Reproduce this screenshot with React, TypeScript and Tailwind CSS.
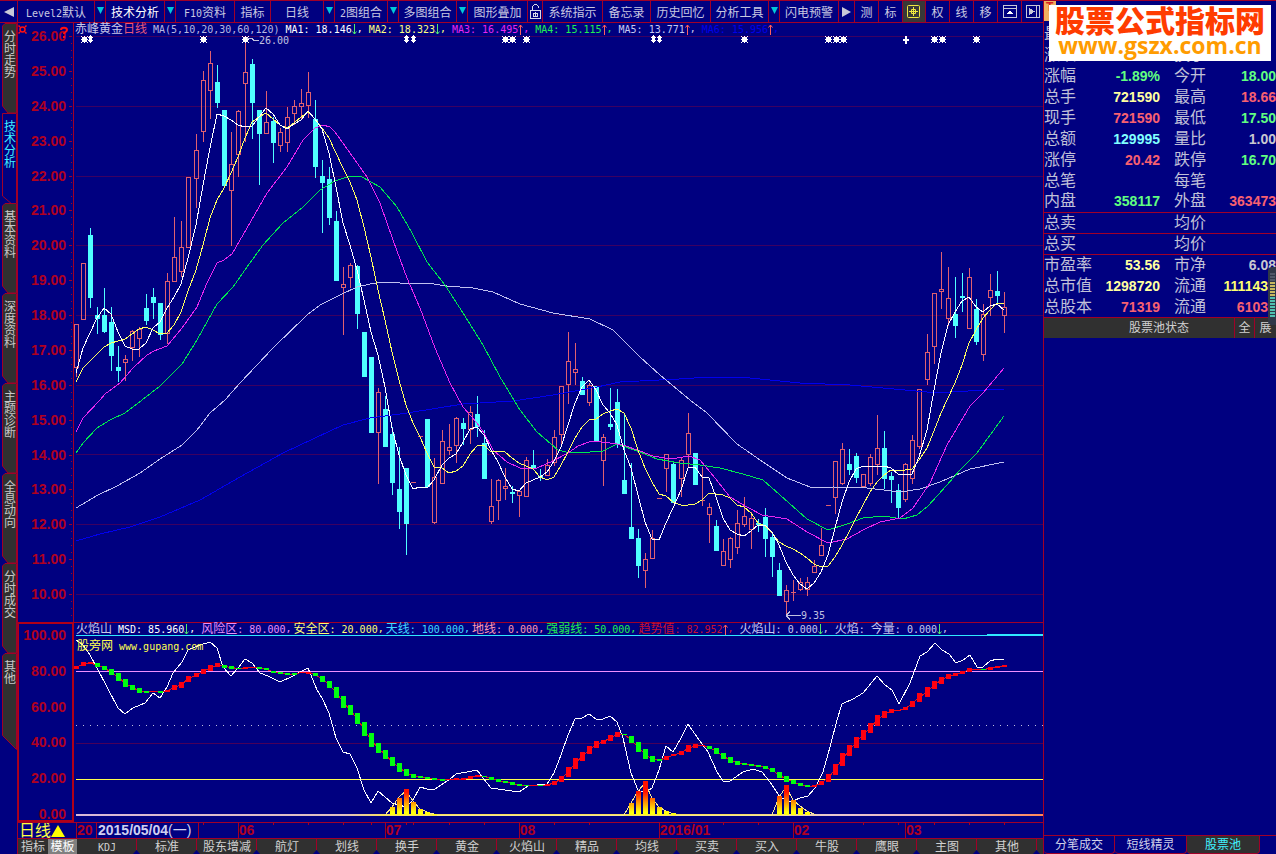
import React from "react";

type Candle = [x: number, kind: "u" | "d", high: number, top: number, bottom: number, low: number];
type Bar = [x: number, top: number, bottom: number, color: "r" | "g"];

const CANDLES: Candle[] = [
  [76, "u", 324, 324, 367, 377], [83, "u", 263, 263, 319, 320], [90, "d", 228, 235, 298, 308],
  [97, "d", 307, 315, 319, 334], [104, "d", 288, 315, 332, 333], [111, "d", 307, 322, 356, 371],
  [118, "d", 346, 367, 371, 382], [125, "u", 355, 359, 362, 381], [132, "u", 330, 331, 347, 361],
  [139, "u", 327, 329, 338, 357], [146, "d", 294, 308, 321, 325], [153, "d", 288, 297, 303, 319],
  [160, "d", 303, 303, 335, 340], [167, "u", 273, 281, 333, 344], [174, "u", 217, 257, 281, 281],
  [181, "u", 221, 247, 271, 277], [188, "u", 177, 177, 247, 247], [196, "u", 134, 150, 178, 208],
  [203, "u", 71, 80, 131, 142], [210, "u", 51, 63, 90, 119], [217, "d", 65, 82, 103, 108],
  [224, "d", 110, 110, 186, 186], [231, "u", 132, 164, 190, 246], [238, "u", 110, 111, 154, 177],
  [245, "u", 40, 72, 83, 142], [252, "d", 59, 64, 103, 139], [259, "d", 110, 110, 134, 185],
  [266, "u", 91, 122, 133, 133], [273, "d", 117, 121, 143, 163], [280, "u", 128, 132, 145, 152],
  [287, "u", 107, 117, 142, 152], [294, "u", 100, 106, 113, 125], [301, "u", 89, 103, 106, 120],
  [308, "u", 72, 92, 105, 118], [315, "d", 100, 119, 167, 178], [322, "d", 160, 176, 183, 233],
  [329, "d", 167, 179, 218, 225], [336, "d", 211, 221, 281, 281], [343, "u", 267, 284, 287, 335],
  [350, "u", 263, 265, 277, 288], [357, "d", 265, 266, 314, 329], [364, "d", 332, 332, 377, 377],
  [371, "d", 357, 357, 433, 433], [378, "u", 388, 392, 432, 484], [385, "d", 396, 409, 447, 447],
  [392, "d", 427, 434, 483, 495], [399, "d", 447, 489, 512, 529], [406, "d", 468, 468, 524, 555],
  [413, "u", 482, 482, 482, 482], [420, "u", 436, 436, 436, 436], [427, "d", 419, 419, 487, 487],
  [434, "u", 458, 477, 522, 524], [442, "u", 430, 441, 483, 483], [449, "u", 424, 447, 450, 455],
  [456, "u", 417, 418, 445, 463], [463, "d", 418, 423, 429, 445], [470, "u", 406, 412, 429, 444],
  [477, "d", 396, 414, 427, 437], [484, "d", 430, 443, 479, 479], [491, "u", 479, 506, 521, 524],
  [498, "u", 479, 480, 500, 520], [505, "u", 468, 486, 488, 500], [512, "d", 486, 492, 494, 503],
  [519, "u", 490, 491, 495, 517], [526, "u", 457, 460, 496, 496], [533, "d", 450, 465, 468, 468],
  [540, "d", 469, 476, 478, 481], [547, "u", 459, 465, 475, 475], [554, "u", 430, 437, 462, 466],
  [561, "u", 386, 386, 434, 445], [568, "u", 332, 361, 384, 404], [575, "u", 343, 369, 372, 385],
  [582, "d", 377, 381, 395, 395], [589, "u", 383, 385, 402, 406], [596, "d", 386, 386, 441, 441],
  [603, "u", 434, 437, 460, 486], [610, "d", 388, 424, 427, 430], [617, "d", 389, 402, 444, 448],
  [624, "d", 413, 480, 494, 494], [631, "d", 463, 527, 539, 539], [638, "d", 529, 538, 566, 578],
  [645, "u", 553, 559, 570, 588], [652, "u", 530, 538, 558, 558], [659, "u", 498, 498, 498, 498],
  [666, "u", 454, 454, 468, 492], [673, "d", 461, 464, 503, 503], [681, "u", 457, 460, 478, 497],
  [688, "u", 413, 433, 454, 467], [695, "d", 453, 453, 485, 485], [702, "u", 467, 500, 501, 506],
  [709, "u", 503, 507, 514, 543], [716, "d", 520, 526, 551, 551], [723, "u", 539, 551, 565, 565],
  [730, "u", 537, 538, 559, 568], [737, "u", 510, 523, 547, 554], [744, "u", 497, 516, 524, 527],
  [751, "u", 512, 518, 529, 549], [758, "d", 519, 523, 525, 532], [765, "d", 508, 517, 539, 557],
  [772, "d", 533, 537, 557, 577], [779, "d", 563, 570, 596, 596], [786, "u", 585, 590, 601, 615],
  [793, "u", 580, 592, 593, 601], [800, "u", 578, 582, 589, 591], [807, "u", 577, 582, 589, 596],
  [814, "u", 560, 566, 572, 572], [821, "u", 528, 545, 555, 555], [828, "u", 505, 505, 505, 505],
  [835, "u", 461, 461, 497, 514], [842, "u", 443, 449, 483, 485], [849, "d", 449, 464, 470, 475],
  [856, "d", 453, 456, 478, 483], [863, "u", 474, 474, 486, 486], [870, "u", 454, 457, 483, 486],
  [877, "u", 415, 448, 464, 475], [884, "d", 431, 448, 479, 489], [891, "d", 472, 476, 480, 503],
  [898, "d", 484, 490, 508, 518], [905, "u", 463, 464, 499, 502], [912, "u", 435, 440, 478, 484],
  [919, "u", 389, 389, 446, 449], [927, "u", 334, 352, 379, 385], [934, "u", 293, 293, 346, 364],
  [941, "u", 252, 289, 291, 309], [948, "u", 267, 298, 318, 326], [955, "d", 277, 314, 326, 338],
  [962, "d", 273, 296, 298, 312], [969, "u", 268, 277, 328, 328], [976, "d", 299, 309, 342, 345],
  [983, "u", 304, 314, 354, 361], [990, "u", 274, 290, 297, 316], [997, "d", 271, 291, 296, 305],
  [1004, "u", 292, 307, 315, 333],
];

const MA5 =
  "76,373 83,348 90,333 97,318 104,308 111,314 118,332 125,346 132,349 139,349 146,343 153,328 160,322 167,308 174,297 181,284 188,258 196,225 203,185 210,148 217,114 224,116 231,120 238,125 245,127 252,126 259,117 266,108 273,114 280,125 287,129 294,124 301,120 308,111 315,119 322,129 329,153 336,187 343,223 350,245 357,270 364,300 371,332 378,355 385,387 392,428 399,455 406,475 413,489 420,487 427,488 434,480 442,465 449,458 456,454 463,442 470,429 477,427 484,435 491,450 498,462 505,477 512,489 519,491 526,483 533,480 540,477 547,472 554,461 561,447 568,425 575,403 582,387 589,380 596,390 603,405 610,413 617,425 624,450 631,468 638,495 645,522 652,539 659,540 666,523 673,508 681,490 688,468 695,467 702,477 709,478 716,497 723,518 730,530 737,534 744,536 751,531 758,525 765,525 772,532 779,545 786,562 793,575 800,584 807,589 814,583 821,572 828,555 835,528 842,502 849,482 856,469 863,466 870,466 877,466 884,466 891,468 898,474 905,475 912,474 919,457 927,430 934,390 941,353 948,325 955,312 962,301 969,297 976,307 983,312 990,306 997,304 1004,310";
const MA10 =
  "76,382 83,368 90,361 97,354 104,347 111,343 118,341 125,339 132,334 139,329 146,327 153,330 160,334 167,333 174,325 181,312 188,291 196,270 203,245 210,218 217,200 224,188 231,173 238,157 245,138 252,122 259,117 266,113 273,119 280,125 287,128 294,123 301,117 308,112 315,119 322,128 329,138 336,153 343,168 350,182 357,200 364,227 371,257 378,290 385,320 392,352 399,380 406,405 413,423 420,437 427,453 434,467 442,468 449,473 456,471 463,466 470,454 477,446 484,445 491,452 498,451 505,452 512,458 519,463 526,466 533,469 540,477 547,480 554,477 561,465 568,452 575,438 582,427 589,420 596,419 603,414 610,411 617,409 624,413 631,428 638,450 645,468 652,482 659,494 666,496 673,502 681,505 688,505 695,504 702,500 709,493 716,494 723,495 730,498 737,505 744,507 751,513 758,523 765,526 772,533 779,542 786,546 793,549 800,553 807,558 814,564 821,567 828,566 835,557 842,545 849,532 856,518 863,505 870,492 877,482 884,475 891,470 898,470 905,470 912,469 919,460 927,448 934,431 941,413 948,398 955,383 962,365 969,343 976,330 983,318 990,310 997,303 1004,304";
const MA20 =
  "76,432 83,418 100,400 105,394 120,383 133,368 147,355 154,351 167,346 182,328 197,307 207,283 217,263 224,260 232,254 247,228 267,193 287,167 303,140 315,128 323,125 330,127 335,132 350,153 367,177 380,203 393,240 407,278 420,308 435,348 450,383 463,407 477,423 484,433 493,450 507,462 520,468 537,468 553,461 568,453 578,446 592,441 610,443 623,445 640,451 653,456 665,458 677,458 689,456 700,460 715,478 730,497 747,507 762,515 787,519 807,532 828,543 847,539 863,530 880,522 900,518 913,508 930,483 947,445 970,406 983,393 1004,368";
const MA30 =
  "76,453 83,443 97,428 110,420 125,413 142,400 160,386 182,364 197,340 217,304 233,287 247,267 263,245 283,223 303,207 320,190 330,184 335,181 350,176 362,177 380,187 397,207 412,233 427,262 445,285 463,313 483,345 500,377 520,410 537,432 558,450 570,453 590,452 603,451 617,444 640,452 657,459 679,463 700,465 720,468 743,474 763,480 780,495 807,519 828,530 847,524 863,518 883,516 903,519 917,515 928,506 947,485 960,470 977,453 1004,416";
const MA60 =
  "76,508 98,495 117,486 140,473 160,459 182,445 197,430 210,413 225,400 240,383 273,348 307,315 320,305 340,295 357,287 370,284 385,282 400,283 427,283 447,286 473,288 493,292 520,304 553,313 590,319 613,330 640,357 660,375 690,400 707,413 737,444 763,462 787,478 810,487 820,488 833,487 867,488 900,492 920,489 940,482 970,469 1004,462";
const MA120 =
  "76,541 100,534 130,527 160,517 200,500 240,477 283,453 330,431 343,425 370,418 407,413 463,404 513,401 553,395 597,387 620,382 679,379 710,377 740,377 800,383 850,385 883,388 927,392 950,392 1004,389";

const MSD =
  "76,640 83,645 90,655 97,668 107,687 118,708 125,714 133,708 145,703 153,693 160,698 167,687 173,673 182,662 188,650 200,645 210,642 217,648 223,667 231,676 238,668 245,659 252,663 260,673 268,676 280,682 293,676 308,668 317,690 322,698 329,713 336,738 343,752 350,754 357,768 364,790 371,803 378,791 385,797 392,803 399,805 406,807 413,800 420,787 427,789 435,789 450,779 456,774 472,771 477,770 483,778 491,788 505,790 519,792 528,786 547,784 554,773 561,755 568,735 575,719 582,718 589,714 596,719 603,719 610,716 617,722 623,738 631,773 638,790 645,793 652,788 659,770 666,746 673,752 681,738 688,724 697,737 708,752 717,772 723,781 730,781 743,772 753,769 762,772 770,782 780,797 790,802 800,798 808,796 815,788 823,772 830,747 837,720 842,704 853,699 863,693 877,676 885,685 892,690 899,704 910,683 920,656 927,652 935,643 942,650 949,654 956,663 963,660 970,655 977,667 983,667 990,661 997,659 1004,660";

const TREND: Bar[] = [
  [76, 666, 669, "r"], [83, 662, 666, "r"], [90, 662, 664, "r"], [97, 663, 667, "g"], [104, 666, 670, "g"],
  [111, 669, 675, "g"], [118, 673, 681, "g"], [125, 679, 687, "g"], [132, 685, 690, "g"], [139, 688, 693, "g"],
  [146, 691, 693, "g"], [153, 691, 692, "r"], [160, 691, 693, "g"], [167, 690, 692, "r"], [174, 685, 690, "r"],
  [181, 682, 688, "r"], [188, 676, 682, "r"], [196, 673, 677, "r"], [203, 669, 674, "r"], [210, 665, 671, "r"],
  [217, 663, 667, "r"], [224, 665, 668, "g"], [231, 666, 669, "g"], [238, 668, 669, "g"], [245, 667, 669, "r"],
  [252, 667, 668, "r"], [259, 667, 669, "g"], [266, 668, 670, "g"], [273, 671, 673, "g"], [280, 672, 674, "g"],
  [287, 673, 675, "g"], [294, 673, 675, "g"], [301, 672, 673, "r"], [308, 672, 674, "r"], [315, 673, 676, "g"],
  [322, 676, 682, "g"], [329, 681, 688, "g"], [336, 687, 698, "g"], [343, 696, 708, "g"], [350, 705, 715, "g"],
  [357, 713, 724, "g"], [364, 722, 736, "g"], [371, 733, 747, "g"], [378, 743, 753, "g"], [385, 750, 759, "g"],
  [392, 757, 766, "g"], [399, 763, 772, "g"], [406, 769, 776, "g"], [413, 774, 778, "g"], [420, 776, 778, "g"],
  [427, 777, 779, "g"], [434, 778, 780, "g"], [442, 779, 781, "g"], [449, 779, 780, "r"], [456, 778, 780, "r"],
  [463, 778, 780, "r"], [470, 776, 779, "r"], [477, 775, 777, "r"], [484, 776, 777, "g"], [491, 777, 780, "g"],
  [498, 779, 782, "g"], [505, 781, 783, "g"], [512, 782, 785, "g"], [519, 784, 786, "g"], [526, 785, 786, "g"],
  [533, 785, 786, "r"], [540, 785, 786, "g"], [547, 784, 786, "r"], [554, 781, 785, "r"], [561, 776, 782, "r"],
  [568, 767, 777, "r"], [575, 758, 769, "r"], [582, 752, 761, "r"], [589, 746, 754, "r"], [596, 741, 748, "r"],
  [603, 740, 744, "r"], [610, 735, 741, "r"], [617, 732, 737, "r"], [624, 734, 735, "g"], [631, 736, 743, "g"],
  [638, 742, 752, "g"], [645, 749, 759, "g"], [652, 756, 762, "g"], [659, 759, 761, "g"], [666, 756, 760, "r"],
  [673, 754, 756, "r"], [681, 751, 755, "r"], [688, 745, 752, "r"], [695, 744, 748, "r"], [702, 745, 746, "r"],
  [709, 746, 749, "g"], [716, 748, 754, "g"], [723, 753, 759, "g"], [730, 757, 763, "g"], [737, 761, 765, "g"],
  [744, 763, 765, "g"], [751, 764, 766, "g"], [758, 765, 767, "g"], [765, 766, 769, "g"], [772, 768, 772, "g"],
  [779, 772, 778, "g"], [786, 776, 782, "g"], [793, 780, 784, "g"], [800, 783, 786, "g"], [807, 785, 787, "g"],
  [814, 785, 787, "r"], [821, 781, 785, "r"], [828, 774, 782, "r"], [835, 764, 775, "r"], [842, 753, 766, "r"],
  [849, 745, 756, "r"], [856, 737, 748, "r"], [863, 730, 740, "r"], [870, 723, 733, "r"], [877, 715, 726, "r"],
  [884, 711, 718, "r"], [891, 709, 713, "r"], [898, 710, 711, "r"], [905, 707, 710, "r"], [912, 701, 707, "r"],
  [919, 693, 702, "r"], [927, 687, 697, "r"], [934, 681, 689, "r"], [941, 677, 684, "r"], [948, 674, 679, "r"],
  [955, 673, 676, "r"], [962, 671, 674, "r"], [969, 668, 672, "r"], [976, 669, 670, "r"], [983, 669, 670, "g"],
  [990, 667, 670, "r"], [997, 666, 668, "r"], [1004, 665, 667, "r"],
];

const FLAMES: [number, number][] = [
  [392, 807], [399, 798], [406, 789], [413, 802], [420, 809], [427, 812], [434, 814],
  [631, 803], [638, 791], [645, 781], [652, 798], [659, 807], [666, 811], [673, 813],
  [779, 796], [786, 785], [793, 800], [800, 808], [807, 812],
];

const STARS = [84, 203, 245, 505, 512, 526, 744, 828, 836, 843, 934, 942, 976];
const DIAMONDS = [90, 406, 413, 653, 659];

const CJK = "font-['DejaVu_Sans_Mono','Noto_Sans_CJK_SC',sans-serif]";

function Mixed({ text }: { text: string }) {
  return (
    <>
      {text.split(/([\x20-\x7e]+)/).map((part, i) =>
        /^[\x20-\x7e]/.test(part) ? (
          <span key={i} className="text-[10px] whitespace-pre">{part}</span>
        ) : (
          part
        ),
      )}
    </>
  );
}

function Drop() {
  return (
    <span className="flex w-[11px] shrink-0 justify-center border-l border-[#a00028] pt-1.5">
      <svg width="7" height="8" viewBox="0 0 7 8">
        <path d="M0 0H7L3.5 7Z" fill="#00c8d8" />
      </svg>
    </span>
  );
}

const TOOLS: { label: string; width: string; drop?: boolean; active?: boolean }[] = [
  { label: "Level2默认", width: "w-[88px]", drop: true },
  { label: "技术分析", width: "w-[70px]", drop: true, active: true },
  { label: "F10资料", width: "w-[59px]" },
  { label: "指标", width: "w-[36px]" },
  { label: "日线", width: "w-[64px]", drop: true },
  { label: "2图组合", width: "w-[64px]", drop: true },
  { label: "多图组合", width: "w-[69px]", drop: true },
  { label: "图形叠加", width: "w-[60px]" },
  { label: "lock", width: "w-[15px]" },
  { label: "系统指示", width: "w-[60px]" },
  { label: "备忘录", width: "w-[48px]" },
  { label: "历史回忆", width: "w-[60px]" },
  { label: "分析工具", width: "w-[69px]", drop: true },
  { label: "闪电预警", width: "w-[59px]" },
  { label: "next", width: "w-[16px]" },
  { label: "测", width: "w-[24px]" },
  { label: "标", width: "w-[24px]" },
  { label: "cross", width: "w-[23px]" },
  { label: "权", width: "w-[24px]" },
  { label: "线", width: "w-[24px]" },
  { label: "移", width: "w-[24px]" },
  { label: "up", width: "w-[24px]" },
  { label: "end", width: "w-[21px]" },
];

const ICONS: Record<string, React.ReactNode> = {
  lock: (
    <svg width="13" height="17" viewBox="0 0 13 17" fill="none" stroke="#d8d8e8" shapeRendering="crispEdges">
      <path d="M3.500 7V3.500L5.500 1.500H7.500L9.500 3.500V5M1.500 7.500H11.500V15.500H1.500ZM4.500 10.500H8.500V13.500H4.500ZM6.500 9V14" />
    </svg>
  ),
  next: (
    <svg width="9" height="10" viewBox="0 0 9 10">
      <path d="M0 0L9 5L0 10Z" fill="#c8c8d8" />
    </svg>
  ),
  cross: (
    <svg width="14" height="14" viewBox="0 0 14 14" fill="none" stroke="#f0e840">
      <rect x="0.5" y="0.5" width="12" height="12" rx="1" />
      <path d="M6.500 2V11M2 6.500H11" />
      <path d="M4.500 4.500H8.500V8.500H4.500Z" />
    </svg>
  ),
  up: (
    <svg width="14" height="14" viewBox="0 0 14 14" fill="none" stroke="#c8c8d8" shapeRendering="crispEdges">
      <path d="M0.500 0.500H13.500V12.500H0.500ZM0 3.500H14" />
      <path d="M7 5.500L10 8.500H4Z" fill="#fff" stroke="none" />
    </svg>
  ),
  end: (
    <svg width="14" height="14" viewBox="0 0 14 14" fill="none" stroke="#c8c8d8" shapeRendering="crispEdges">
      <path d="M0.500 0.500H13.500V12.500H0.500ZM10.500 0V13" />
      <path d="M3 3L9 6.500L3 10Z" fill="#c8c8d8" stroke="none" />
    </svg>
  ),
};

function Toolbar() {
  return (
    <nav className="flex h-[23px] shrink-0 border-y border-[#a00028] text-xs text-[#c8c8e0]">
      <button aria-label="上一页" className="flex w-[18px] shrink-0 items-center justify-center border-r border-[#a00028]">
        <svg width="10" height="10" viewBox="0 0 10 10">
          <path d="M10 0V10L0 5Z" fill="#c8c8d8" />
        </svg>
      </button>
      {TOOLS.map((t) => (
        <button
          key={t.label}
          aria-label={t.label}
          className={`flex shrink-0 items-stretch border-r border-[#a00028] ${t.width} ${t.active ? "text-white" : ""} ${t.label === "cross" ? "bg-[#383838]" : ""} ${t.label === "end" ? "border-r-0" : ""}`}
        >
          <span className={`flex flex-1 items-center justify-center whitespace-nowrap ${ICONS[t.label] ? "" : "pt-0.5"}`}>
            <span>{ICONS[t.label] ?? <Mixed text={t.label} />}</span>
          </span>
          {t.drop && <Drop />}
        </button>
      ))}
    </nav>
  );
}

const SIDE_TABS = ["分时走势", "技术分析", "基本资料", "深度资料", "主题诊断", "全息动向", "分时成交", "其他"];

function SideTabs() {
  return (
    <aside className="flex w-[18px] shrink-0 flex-col border-r border-[#a00028]">
      {SIDE_TABS.map((label, i) => {
        const active = i === 1;
        const last = i === 7;
        return (
          <button key={label} className={`relative flex w-full shrink-0 justify-end pt-2 pr-px ${last ? "h-[98px]" : "h-[90px]"}`}>
            <svg className="absolute inset-0" width="17" height={last ? 98 : 90} fill={active ? "#000080" : "#303030"} stroke="#a00028">
              <path
                d={
                  last
                    ? "M2.500 3L5 0.500H16.500V96.500L2.500 82.500Z"
                    : active
                      ? "M2.500 0.500H16.500V95L2.500 83Z"
                      : "M2.500 3L5 0.500H16.500V90H8L2.500 83Z"
                }
              />
            </svg>
            <span className={`relative w-3 text-xs leading-3 break-all ${active ? "text-[#40f0ff]" : "text-[#c8c8c8]"}`}>{label}</span>
          </button>
        );
      })}
    </aside>
  );
}

function Arrow({ up }: { up?: boolean }) {
  return (
    <svg className="h-[11px] w-[5px] shrink-0" viewBox="0 0 5 11" fill="none" stroke={up ? "#ff6060" : "#50e870"}>
      <path d={up ? "M2.500 11V1M0.500 3.500L2.500 1L4.500 3.500" : "M2.500 0V10M0.500 7.500L2.500 10L4.500 7.500"} />
    </svg>
  );
}

function Item({ text, color, arrow }: { text: string; color: string; arrow?: "up" | "down" }) {
  const value = text.includes(".");
  return (
    <span className={`flex items-center ${color} ${arrow || !value ? "mr-1" : ""}`}>
      <span className="whitespace-nowrap"><Mixed text={text} /></span>
      {arrow && <Arrow up={arrow === "up"} />}
      {value && <span className="text-[10px]">,</span>}
    </span>
  );
}

function PriceAxis() {
  const labels = Array.from({ length: 17 }, (_, i) => `${26 - i}.00`);
  return (
    <div className="relative flex w-[56px] shrink-0 flex-col justify-between border-r border-[#a00028] pt-1 pr-[7px] pb-[19px] text-right text-sm leading-[18px] font-bold text-[#b00020]">
      {labels.map((l) => (
        <span key={l}>{l}</span>
      ))}
      <svg className="absolute inset-0 h-full w-full" viewBox="18 23 56 599" preserveAspectRatio="none" shapeRendering="crispEdges">
        {labels.map((l, i) => (
          <path key={l} d={`M70 ${Math.round(36 + i * 34.875) + 0.5}H73`} stroke="#a00028" />
        ))}
        {Array.from({ length: 84 }, (_, i) => (
          <path key={i} d={`M72 ${Math.round(36 + i * 6.975) + 0.5}H73`} stroke="#a00028" />
        ))}
      </svg>
      <svg className="absolute top-0.5 left-0" width="52" height="16" fill="none" stroke="#ff1010">
        <circle cx="4.500" cy="4.500" r="2.500" strokeWidth="1.500" />
        <path d="M0.500 0.500L2 2M8.500 0.500L7 2M0.500 8.500L2 7M8.500 8.500L7 7" strokeWidth="1.500" />
        <path d="M43 5C43 2 49 2 49 5C49 7 46 7 46 9M46 11V13" strokeWidth="2" />
      </svg>
    </div>
  );
}

function PriceChart() {
  return (
    <section className="flex min-h-0 grow-[599] basis-0">
      <PriceAxis />
      <div className="relative flex min-h-0 min-w-0 flex-1">
        <svg className="min-h-0 min-w-0 flex-1" viewBox="74 23 969 599" preserveAspectRatio="none" fill="none" shapeRendering="crispEdges">
          {[36, 106, 176, 245, 315, 385, 454, 524, 594].map((y) => (
            <path key={y} d={`M76 ${y + 0.5}H1043`} stroke="#3c0060" />
          ))}
          {CANDLES.map(([x, kind, high, top, bottom, low]) =>
            kind === "d" ? (
              <g key={x} fill="#50ffff">
                <rect x={x} y={high} width="1" height={low - high} />
                <rect x={x - 2} y={top} width="5" height={Math.max(bottom - top, 1)} />
              </g>
            ) : bottom - top < 2 ? (
              <g key={x} fill="#e06070">
                <rect x={x} y={high} width="1" height={low - high} />
                <rect x={x - 2} y={top} width="5" height="1" />
              </g>
            ) : (
              <g key={x} stroke="#e06070">
                <path d={`M${x + 0.5} ${high}V${top}M${x + 0.5} ${bottom}V${low}`} />
                <rect x={x - 1.5} y={top + 0.5} width="4" height={bottom - top} />
              </g>
            ),
          )}
          <polyline points={MA120} stroke="#0000ee" />
          <polyline points={MA60} stroke="#c0c0f0" />
          <polyline points={MA30} stroke="#00e850" />
          <polyline points={MA20} stroke="#e828f0" />
          <polyline points={MA10} stroke="#ffff60" />
          <polyline points={MA5} stroke="#ffffff" />
          {STARS.map((x) => (
            <path key={x} d={`M${x - 2} 37h5v5h-5zM${x} 36h1v7h-1zM${x - 3} 39h7v1h-7zM${x - 3} 36h1v1h-1zM${x + 3} 36h1v1h-1zM${x - 3} 42h1v1h-1zM${x + 3} 42h1v1h-1z`} fill="#fff" />
          ))}
          {DIAMONDS.map((x) => (
            <path key={x} d={`M${x} 35h1v8h-1zM${x - 1} 36h3v6h-3zM${x - 2} 37h5v1h-5zM${x - 2} 40h5v1h-5z`} fill="#fff" />
          ))}
          <path d="M905 36h1v3h2v1h-2v3h-1v-3h-2v-1h2z" fill="#fff" stroke="#fff" />
          <path d="M247 38.500L252 38.500L254 40.500H259M786 615.500H801M786 615.500L790 611.500M786 615.500L790 619.500" stroke="#c0c0e0" />
          <g fill="#c0c0e0" fontSize="10" fontFamily="DejaVu Sans Mono, monospace">
            <text x="259" y="44">26.00</text>
            <text x="801" y="619">9.35</text>
          </g>
        </svg>
        <div className="absolute top-0 left-px flex h-3 items-center gap-0.5 text-xs leading-3 text-[#c8c8e8]">
          <span className="mr-1 whitespace-nowrap">赤峰黄金<span className="text-[#e85878]">日线</span></span>
          <Item text="MA(5,10,20,30,60,120)" color="text-[#b8b8e0]" />
          <Item text="MA1: 18.146" color="text-white" arrow="down" />
          <Item text="MA2: 18.323" color="text-[#ffff80]" arrow="down" />
          <Item text="MA3: 16.495" color="text-[#e828f0]" arrow="up" />
          <Item text="MA4: 15.115" color="text-[#20f050]" arrow="up" />
          <Item text="MA5: 13.771" color="text-[#c8c8f0]" arrow="up" />
          <Item text="MA6: 15.956" color="text-[#0000e8]" arrow="up" />
        </div>
      </div>
    </section>
  );
}

function IndicatorChart() {
  const labels = ["100.00", "80.00", "60.00", "40.00", "20.00", "0.00"];
  return (
    <section className="flex min-h-0 grow-[200] basis-0">
      <div className="relative flex w-[56px] shrink-0 flex-col justify-between border-2 border-l border-[#b00018] pt-[5px] pr-[6px] text-right text-sm leading-3 font-bold text-[#b00020]">
        {labels.map((l) => (
          <span key={l}>{l}</span>
        ))}
      </div>
      <div className="relative flex min-h-0 min-w-0 flex-1 border-t border-[#a00028]">
        <svg className="min-h-0 min-w-0 flex-1" viewBox="74 623 969 199" preserveAspectRatio="none" fill="none" shapeRendering="crispEdges">
          <defs>
            <linearGradient id="flame" gradientUnits="userSpaceOnUse" x1="0" y1="792" x2="0" y2="812">
              <stop offset="0" stopColor="#ff1000" />
              <stop offset="0.500" stopColor="#ff9000" />
              <stop offset="1" stopColor="#ffff10" />
            </linearGradient>
            <linearGradient id="ground" gradientUnits="userSpaceOnUse" x1="74" y1="0" x2="1043" y2="0">
              <stop offset="0" stopColor="#d8b8d8" />
              <stop offset="0.280" stopColor="#e0c0c0" />
              <stop offset="0.320" stopColor="#f8e060" />
              <stop offset="0.680" stopColor="#f8e060" />
              <stop offset="0.780" stopColor="#e8c8d0" />
              <stop offset="0.900" stopColor="#e8b0c0" />
              <stop offset="1" stopColor="#ff8858" />
            </linearGradient>
          </defs>
          <path d="M76 743.500H1043" stroke="#480058" />
          <path d="M76 725.500H1043" stroke="#c0c0e0" strokeDasharray="1 6" />
          <path d="M76 635.500H1043M987 634.500H1043" stroke="#30e8ff" />
          <path d="M76 671.500H1043" stroke="#f090ff" />
          <path d="M76 779.500H1043" stroke="#ffff50" />
          <rect x="76" y="814" width="967" height="2" fill="url(#ground)" />
          <polyline points={MSD} stroke="#fff" />
          <polyline
            points="385,815 392,807 399,797 406,791 413,801 420,809 427,812 437,815 624,815 631,803 638,791 645,783 652,798 659,807 666,811 676,815 772,815 779,797 786,787 793,800 800,806 807,811 816,815"
            stroke="#f8e890"
          />
          <polyline points={TREND.map(([x, t, b]) => `${x},${(t + b) / 2}`).join(" ")} stroke="#e01818" />
          {TREND.map(([x, t, b, c]) => (
            <rect key={x} x={x - 2} y={t} width="5" height={b - t} fill={c === "r" ? "#ff0010" : "#00ff10"} />
          ))}
          {FLAMES.map(([x, t]) => (
            <rect key={x} x={x - 2} y={t} width="5" height={815 - t} fill="url(#flame)" />
          ))}
        </svg>
        <div className="absolute top-0 left-0.5 flex h-3 items-center gap-0.5 text-xs leading-3">
          <Item text="火焰山" color="text-[#c8c8e8]" />
          <Item text="MSD: 85.960" color="text-white" arrow="down" />
          <Item text="风险区: 80.000" color="text-[#e890f8]" />
          <Item text="安全区: 20.000" color="text-[#ffff70]" />
          <Item text="天线: 100.000" color="text-[#40d8ff]" />
          <Item text="地线: 0.000" color="text-[#ff98b0]" />
          <Item text="强弱线: 50.000" color="text-[#20f050]" />
          <Item text="趋势值: 82.952" color="text-[#c81030]" arrow="up" />
          <Item text="火焰山: 0.000" color="text-[#c8c8f0]" arrow="down" />
          <Item text="火焰:" color="text-[#c8c8f0]" />
          <Item text="今量: 0.000" color="text-[#c8c8f0]" arrow="down" />
        </div>
        <div className="absolute top-[17px] left-[3px] text-xs leading-3 whitespace-nowrap text-[#ffff50]">
          <Mixed text="股旁网 www.gupang.com" />
        </div>
      </div>
    </section>
  );
}

const MONTHS: { label: string; grow: string }[] = [
  { label: "", grow: "grow-[39]" },
  { label: "06", grow: "grow-[147]" },
  { label: "07", grow: "grow-[134]" },
  { label: "08", grow: "grow-[140]" },
  { label: "2016/01", grow: "grow-[134]" },
  { label: "02", grow: "grow-[112]" },
  { label: "03", grow: "grow-[138]" },
];

function DateAxis() {
  return (
    <div className="relative flex h-4 shrink-0 overflow-hidden border-t border-[#a00028] text-sm leading-[15px] font-bold text-[#b00020]">
      <button className="flex w-[58px] shrink-0 items-center pl-px text-base leading-[15px] font-normal text-[#ffff40]">
        日线
        <svg width="14" height="12" viewBox="0 0 14 12">
          <path d="M7 0L14 12H0Z" fill="#ffff00" />
        </svg>
      </button>
      <span className="w-[20px] shrink-0 border-l border-[#a00028]">20</span>
      <span className="w-[102px] shrink-0 border-l border-[#a00028] pl-px whitespace-nowrap text-[#d0d0f0]">2015/05/04<span className="font-normal">(一)</span></span>
      {MONTHS.map((m, i) => (
        <span key={i} className={`basis-0 border-l border-[#a00028] ${m.grow}`}>{m.label}</span>
      ))}
      <svg className="absolute inset-0 h-full w-full" viewBox="18 823 1025 15" preserveAspectRatio="none" shapeRendering="crispEdges">
        {[203, 273, 308, 343, 371, 406, 413, 449, 484, 554, 589, 723, 758, 863, 898, 934, 969, 1004].map((x) => (
          <path key={x} d={`M${x + 0.5} 823V825`} stroke="#a00028" />
        ))}
      </svg>
    </div>
  );
}

const TEMPLATE_TABS = ["KDJ", "标准", "股东增减", "航灯", "划线", "换手", "黄金", "火焰山", "精品", "均线", "买卖", "买入", "牛股", "鹰眼", "主图", "其他"];

function TemplateTabs() {
  return (
    <nav className="flex h-4 shrink-0 overflow-hidden border-t border-[#a00028] bg-[#303030] text-xs leading-4 text-[#d0d0d0]">
      <button className="w-[30px] shrink-0 whitespace-nowrap">指标</button>
      <button className="w-[29px] shrink-0 bg-[#808080] whitespace-nowrap text-white">模板</button>
      {TEMPLATE_TABS.map((t) => (
        <button key={t} className="relative min-w-0 flex-1 whitespace-nowrap">
          <Mixed text={t} />
          <svg className="absolute top-0 -right-1 z-10" width="8" height="15">
            <path d="M3.500 0V11" stroke="#a00028" />
            <path d="M3.500 11L7 15H0Z" fill="#000080" />
          </svg>
        </button>
      ))}
      <span className="w-[6px] shrink-0" />
    </nav>
  );
}

const GREEN = "text-[#60ff80]";
const YELLOW = "text-[#ffffa0]";
const RED = "text-[#f86070]";
const GRAY = "text-[#c8c8d0]";

const QUOTES: { a: string; av?: string; ac?: string; b: string; bv?: string; bc?: string; line?: boolean; cut?: boolean }[] = [
  { a: "最新", b: "" },
  { a: "涨跌", b: "换手" },
  { a: "涨幅", av: "-1.89%", ac: GREEN, b: "今开", bv: "18.00", bc: GREEN },
  { a: "总手", av: "721590", ac: YELLOW, b: "最高", bv: "18.66", bc: RED },
  { a: "现手", av: "721590", ac: RED, b: "最低", bv: "17.50", bc: GREEN },
  { a: "总额", av: "129995", ac: "text-[#80ffff]", b: "量比", bv: "1.00", bc: GRAY },
  { a: "涨停", av: "20.42", ac: RED, b: "跌停", bv: "16.70", bc: GREEN },
  { a: "总笔", b: "每笔" },
  { a: "内盘", av: "358117", ac: GREEN, b: "外盘", bv: "363473", bc: RED },
  { a: "总卖", b: "均价", line: true },
  { a: "总买", b: "均价", line: true },
  { a: "市盈率", av: "53.56", ac: YELLOW, b: "市净", bv: "6.08", bc: GRAY, line: true },
  { a: "总市值", av: "1298720", ac: YELLOW, b: "流通", bv: "111143", bc: "text-[#ffff70]", cut: true },
  { a: "总股本", av: "71319", ac: RED, b: "流通", bv: "6103", bc: RED, cut: true },
];

function QuotePanel() {
  return (
    <aside className="relative flex w-[233px] shrink-0 flex-col overflow-hidden border-l border-[#a00028]">
      <div className="flex h-[23px] shrink-0 items-start border-t border-[#a00028]">
        <span className="h-5 w-3 bg-[#f0b060] pl-0.5 text-xs leading-3 font-bold text-[#d82020]">T</span>
      </div>
      <table className="w-full table-fixed border-collapse text-base leading-5">
        <colgroup>
          <col className="w-[50px]" />
          <col className="w-[66px]" />
          <col className="w-[62px]" />
          <col />
        </colgroup>
        <tbody>
          {QUOTES.map((q, i) => (
            <tr key={i} className={`h-[21px] ${q.line ? "border-t border-[#a00028]" : ""}`}>
              <th className="p-0 text-left leading-5 font-normal whitespace-nowrap text-[#c0c0d8]">{q.a}</th>
              <td className={`p-0 text-right text-sm leading-5 font-bold ${q.ac ?? ""}`}>{q.av}</td>
              <th className="p-0 pl-3.5 text-left font-normal whitespace-nowrap text-[#c0c0d8]">{q.b}</th>
              <td className={`p-0 text-right text-sm leading-5 font-bold ${q.cut ? "pr-2" : ""} ${q.bc ?? ""}`}>{q.bv}</td>
            </tr>
          ))}
        </tbody>
      </table>
      <div className="flex h-[21px] shrink-0 border-t border-[#a00028] bg-[#303030] text-xs leading-5 text-[#d0d0d0]">
        <h2 className="flex-1 pl-10 text-center">股票池状态</h2>
        <button className="w-[21px] border-x border-[#a00028]">全</button>
        <button className="w-[21px]">展</button>
      </div>
      <div className="min-h-0 flex-1" />
      <nav className="flex h-[19px] shrink-0 border-t border-[#a00028] text-xs leading-[18px] text-[#d0d0e8]">
        <button className="w-[71px] rounded-b border-r border-b border-[#a00028]">分笔成交</button>
        <button className="w-[72px] rounded-b border-r border-b border-[#a00028]">短线精灵</button>
        <button className="w-[73px] rounded-b border-r border-b border-[#a00028] bg-[#303030] text-[#40f0ff]">股票池</button>
      </nav>

      <a
        href="#home"
        className="absolute top-[5px] right-[5px] left-[5px] flex h-14 flex-col items-center bg-white font-['Open_Sans','Noto_Sans_CJK_SC',sans-serif] font-bold whitespace-nowrap"
      >
        <span className="text-[30px] leading-8 font-black text-[#ff3c00]">股票公式指标网</span>
        <span className="text-[23px] leading-[17px] text-[#ff9c00]">www.gszx.com.cn</span>
      </a>
      <div className="absolute top-[267px] right-0 flex h-[58px] w-2 flex-col items-center rounded-l-sm bg-[#303848] py-1.5">
        <svg width="5" height="46" shapeRendering="crispEdges">
          {Array.from({ length: 15 }, (_, i) => (
            <rect key={i} y={i * 3} width="5" height="2" fill={i < 3 ? "#505868" : i < 8 ? "#c8b860" : "#50c0b0"} />
          ))}
        </svg>
      </div>
    </aside>
  );
}

export default function App() {
  return (
    <div className={`flex h-screen overflow-hidden bg-[#000080] ${CJK}`}>
      <main className="flex min-w-0 flex-1 flex-col">
        <Toolbar />
        <div className="flex min-h-0 flex-1">
          <SideTabs />
          <div className="flex min-h-0 min-w-0 flex-1 flex-col font-['Liberation_Sans','Noto_Sans_CJK_SC',sans-serif]">
            <div className={`contents [&_.text-xs]:font-['DejaVu_Sans_Mono','Noto_Sans_CJK_SC',sans-serif]`}>
              <PriceChart />
              <IndicatorChart />
              <DateAxis />
              <TemplateTabs />
            </div>
          </div>
        </div>
      </main>
      <div className="flex font-['Liberation_Sans','Noto_Sans_CJK_SC',sans-serif]">
        <QuotePanel />
      </div>
    </div>
  );
}
